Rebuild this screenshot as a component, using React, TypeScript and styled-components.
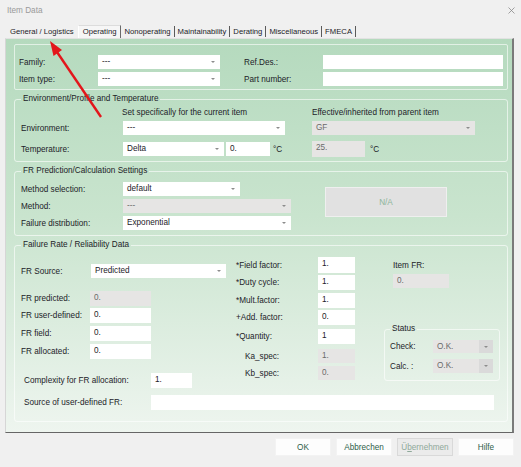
import React from 'react';
import styled, { createGlobalStyle, css } from 'styled-components';

const GlobalStyle = createGlobalStyle`
  html, body { margin: 0; padding: 0; background: #f0f0f0; }
  * { box-sizing: border-box; }
`;

const Window = styled.div`
  position: relative;
  width: 521px;
  height: 467px;
  overflow: hidden;
  background: #f0f0f0;
  font-family: "Liberation Sans", Arial, sans-serif;
  font-size: 8.2px;
  color: #1c2228;
`;

const TitleBar = styled.div`
  display: flex;
  align-items: center;
  justify-content: space-between;
  height: 20px;
  padding: 0 6px 0 7px;
  color: #9a9a9a;
`;

const TabStrip = styled.div`
  display: flex;
  height: 13px;
  margin-top: 5px;
  padding-left: 7px;
  font-size: 7.7px;
`;

const Tab = styled.div<{ $active?: boolean; $noSep?: boolean }>`
  display: flex;
  align-items: center;
  white-space: nowrap;
  ${p =>
    p.$active
      ? css`
          height: 13px;
          padding: 0 4px 1px 4px;
          background: #f6f6f6;
          border: 1px solid #dcdcdc;
          border-left-color: #ffffff;
          border-right-color: #6a6a6a;
          border-bottom: none;
        `
      : css`
          align-self: flex-end;
          height: 11px;
          margin-bottom: 1px;
          padding: 0 3px;
          border-right: 1px solid ${p.$noSep ? 'transparent' : '#5a5a5a'};
        `}
`;

const Panel = styled.div`
  display: flex;
  flex-direction: column;
  gap: 4px;
  height: 395px;
  margin: 0 7px 0 5px;
  padding: 5px 4px 0 8px;
  background: linear-gradient(180deg, #b5dabe 0%, #c9e4ce 45%, #eef5ef 100%);
  border-top: 1px solid #e2e2e2;
  border-left: 1px solid #d6d6d6;
  border-right: 2px solid #7a7a7a;
  border-bottom: 1px solid #666;
`;

const Box = styled.div`
  display: flex;
  flex-direction: column;
  padding: 10px 5px 3px 4px;
  border: 1px solid rgba(255, 255, 255, 0.6);
  border-radius: 2px;
`;

const Group = styled.fieldset<{ $pt?: number; $pb?: number; $pl?: number; $w?: number; $mt?: number }>`
  margin: ${p => p.$mt ?? 0}px 0 0 0;
  min-width: 0;
  ${p => p.$w && `width: ${p.$w}px;`}
  padding: ${p => p.$pt ?? 0}px 6px ${p => p.$pb ?? 4}px ${p => p.$pl ?? 6}px;
  border: 1px solid rgba(255, 255, 255, 0.6);
  border-radius: 3px;
`;

const Legend = styled.legend`
  padding: 0 2px;
  line-height: 10px;
  font-size: 8.2px;
  color: #1c2228;
`;

const Row = styled.div<{ $h?: number; $mt?: number; $ml?: number }>`
  display: flex;
  align-items: center;
  flex: none;
  height: ${p => p.$h ?? 14}px;
  margin-top: ${p => p.$mt ?? 0}px;
  margin-left: ${p => p.$ml ?? 0}px;
`;

const Label = styled.span<{ $w?: number; $indent?: number; $ml?: number }>`
  flex: none;
  ${p => p.$w && `width: ${p.$w}px;`}
  padding-left: ${p => p.$indent ?? 0}px;
  margin-left: ${p => p.$ml ?? 0}px;
  white-space: nowrap;
`;

const Field = styled.div<{ $w: number; $h?: number; $ml?: number; $disabled?: boolean }>`
  display: flex;
  align-items: flex-start;
  flex: none;
  width: ${p => p.$w}px;
  height: ${p => (p.$h ? `${p.$h}px` : '100%')};
  margin-left: ${p => p.$ml ?? 0}px;
  padding: 2px 4px 0 4px;
  line-height: 10px;
  white-space: nowrap;
  background: ${p => (p.$disabled ? '#e6e5e4' : '#ffffff')};
  color: ${p => (p.$disabled ? '#6a6a6a' : '#1c2228')};
`;

const SelectBox = styled(Field)`
  align-items: center;
  justify-content: space-between;
  padding-top: 0;
  padding-right: 0;
`;

const Caret = styled.span<{ $shade?: boolean }>`
  display: flex;
  align-items: center;
  justify-content: center;
  align-self: stretch;
  width: 14px;
  background: ${p => (p.$shade ? '#dadada' : 'transparent')};
  &::after {
    content: '';
    border-left: 2px solid transparent;
    border-right: 2px solid transparent;
    border-top: 2px solid #8c8c8c;
  }
`;

const Col = styled.div<{ $w: number }>`
  display: flex;
  flex-direction: column;
  flex: none;
  width: ${p => p.$w}px;
`;

const Columns = styled.div`
  display: flex;
  align-items: flex-start;
`;

const NAButton = styled.div`
  display: flex;
  align-items: center;
  justify-content: center;
  flex: none;
  width: 122px;
  height: 30px;
  margin: 5px 0 0 34px;
  background: #e1e1e1;
  border: 1px solid #efefef;
  color: #8db59a;
`;

const Footer = styled.div`
  display: flex;
  justify-content: flex-end;
  gap: 5px;
  padding: 5px 7px 0 0;
`;

const Button = styled.div<{ $disabled?: boolean }>`
  display: flex;
  align-items: center;
  justify-content: center;
  width: 56px;
  height: 18px;
  background: ${p => (p.$disabled ? '#ebebeb' : '#fdfdfd')};
  border: 1px solid ${p => (p.$disabled ? '#d9d9d9' : '#f3f3f3')};
  color: ${p => (p.$disabled ? '#8fa99a' : '#2e5d49')};
`;

const Overlay = styled.svg`
  position: absolute;
  left: 0;
  top: 0;
  pointer-events: none;
`;

type SelProps = { w: number; value: string; disabled?: boolean; shade?: boolean; ml?: number; h?: number };
const Select = ({ w, value, disabled, shade, ml, h }: SelProps) => (
  <SelectBox $w={w} $disabled={disabled} $ml={ml} $h={h}>
    <span>{value}</span>
    <Caret $shade={shade} />
  </SelectBox>
);

const App: React.FC = () => (
  <Window>
    <GlobalStyle />
    <TitleBar>
      <span>Item Data</span>
      <svg width="7" height="7" viewBox="0 0 7 7">
        <path d="M0.5 0.5 L6.5 6.5 M6.5 0.5 L0.5 6.5" stroke="#8a8a8a" strokeWidth="0.8" />
      </svg>
    </TitleBar>

    <TabStrip>
      <Tab $noSep>General / Logistics</Tab>
      <Tab $active>Operating</Tab>
      <Tab>Nonoperating</Tab>
      <Tab>Maintainability</Tab>
      <Tab>Derating</Tab>
      <Tab>Miscellaneous</Tab>
      <Tab>FMECA</Tab>
    </TabStrip>

    <Panel>
      <Box>
        <Row>
          <Label $w={79}>Family:</Label>
          <Select w={122} value="---" />
          <Label $w={79} $ml={24}>Ref.Des.:</Label>
          <Field $w={180} />
        </Row>
        <Row $mt={3}>
          <Label $w={79}>Item type:</Label>
          <Select w={122} value="---" />
          <Label $w={79} $ml={24}>Part number:</Label>
          <Field $w={180} />
        </Row>
      </Box>

      <Group $pt={3} $pb={5}>
        <Legend>Environment/Profile and Temperature</Legend>
        <Row $h={10}>
          <Label $w={101} />
          <Label $w={190}>Set specifically for the current item</Label>
          <Label>Effective/inherited from parent item</Label>
        </Row>
        <Row $mt={4}>
          <Label $w={102}>Environment:</Label>
          <Select w={162} value="---" />
          <Select w={163} value="GF" disabled ml={27} />
        </Row>
        <Row $mt={7}>
          <Label $w={102}>Temperature:</Label>
          <Select w={101} value="Delta" />
          <Field $w={44} $ml={2}>0.</Field>
          <Label $w={39} $ml={3}>°C</Label>
          <Field $w={53} $h={16} $disabled>25.</Field>
          <Label $ml={5}>°C</Label>
        </Row>
      </Group>

      <Group $pt={6} $pb={5}>
        <Legend>FR Prediction/Calculation Settings</Legend>
        <Columns>
          <Col $w={270}>
            <Row>
              <Label $w={102}>Method selection:</Label>
              <Select w={117} value="default" />
            </Row>
            <Row $mt={3}>
              <Label $w={102}>Method:</Label>
              <Select w={168} value="---" disabled />
            </Row>
            <Row $mt={3}>
              <Label $w={102}>Failure distribution:</Label>
              <Select w={168} value="Exponential" />
            </Row>
          </Col>
          <NAButton>N/A</NAButton>
        </Columns>
      </Group>

      <Group $pt={0} $pb={11}>
        <Legend>Failure Rate / Reliability Data</Legend>
        <Columns>
          <Col $w={215}>
            <Row $mt={14}>
              <Label $w={70}>FR Source:</Label>
              <Select w={135} value="Predicted" />
            </Row>
            <Row $mt={13} $h={15}>
              <Label $w={69}>FR predicted:</Label>
              <Field $w={61} $disabled>0.</Field>
            </Row>
            <Row $mt={2} $h={15}>
              <Label $w={69}>FR user-defined:</Label>
              <Field $w={61}>0.</Field>
            </Row>
            <Row $mt={3} $h={15}>
              <Label $w={69}>FR field:</Label>
              <Field $w={61}>0.</Field>
            </Row>
            <Row $mt={3} $h={15}>
              <Label $w={69}>FR allocated:</Label>
              <Field $w={61}>0.</Field>
            </Row>
            <Row $mt={14} $h={15} $ml={3}>
              <Label $w={127}>Complexity for FR allocation:</Label>
              <Field $w={41}>1.</Field>
            </Row>
          </Col>

          <Col $w={148}>
            <Row $mt={7} $h={16}>
              <Label $w={82}>*Field factor:</Label>
              <Field $w={37}>1.</Field>
            </Row>
            <Row $mt={2} $h={15}>
              <Label $w={82}>*Duty cycle:</Label>
              <Field $w={37}>1.</Field>
            </Row>
            <Row $mt={3} $h={15}>
              <Label $w={82}>*Mult.factor:</Label>
              <Field $w={37}>1.</Field>
            </Row>
            <Row $mt={2} $h={15}>
              <Label $w={82}>+Add. factor:</Label>
              <Field $w={37}>0.</Field>
            </Row>
            <Row $mt={4} $h={15}>
              <Label $w={82}>*Quantity:</Label>
              <Field $w={37}>1</Field>
            </Row>
            <Row $mt={5}>
              <Label $w={82} $indent={9}>Ka_spec:</Label>
              <Field $w={37} $disabled>1.</Field>
            </Row>
            <Row $mt={3}>
              <Label $w={82} $indent={9}>Kb_spec:</Label>
              <Field $w={37} $disabled>0.</Field>
            </Row>
          </Col>

          <Col $w={116}>
            <Row $mt={10} $h={10} $ml={9}>
              <Label>Item FR:</Label>
            </Row>
            <Row $mt={4} $ml={9}>
              <Field $w={56} $disabled>0.</Field>
            </Row>
            <Group $w={116} $mt={36} $pt={6} $pb={7} $pl={5}>
              <Legend>Status</Legend>
              <Row $h={13}>
                <Label $w={43}>Check:</Label>
                <Select w={60} value="O.K." disabled shade />
              </Row>
              <Row $mt={6}>
                <Label $w={43}>Calc. :</Label>
                <Select w={60} value="O.K." disabled shade />
              </Row>
            </Group>
          </Col>
        </Columns>
        <Row $mt={7} $h={15} $ml={3}>
          <Label $w={127}>Source of user-defined FR:</Label>
          <Field $w={343} />
        </Row>
      </Group>
    </Panel>

    <Footer>
      <Button>OK</Button>
      <Button>Abbrechen</Button>
      <Button $disabled>
        <span>
          Ü<u>b</u>ernehmen
        </span>
      </Button>
      <Button>Hilfe</Button>
    </Footer>

    <Overlay width="521" height="467" viewBox="0 0 521 467">
      <line x1="101" y1="117" x2="57" y2="52" stroke="#e3161b" strokeWidth="2.4" />
      <polygon points="50,41 62,50 53.5,56" fill="#e3161b" />
    </Overlay>
  </Window>
);

export default App;
